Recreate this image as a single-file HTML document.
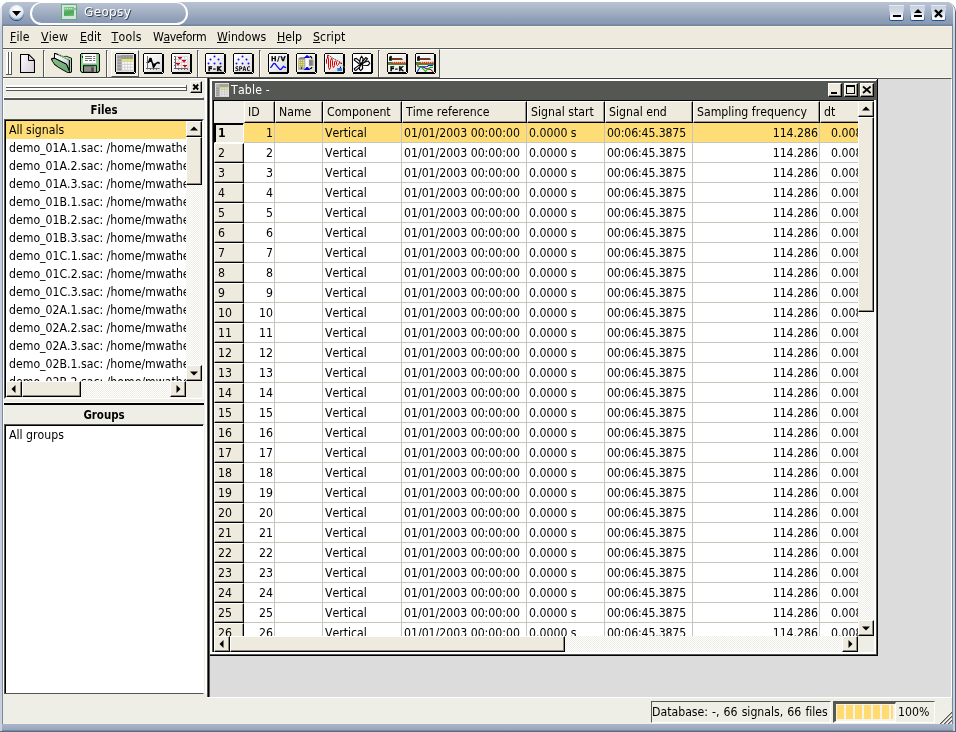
<!DOCTYPE html>
<html lang="en"><head><meta charset="utf-8"><title>Geopsy</title>
<style>
html,body{margin:0;padding:0;background:#fff;}
body{width:956px;height:732px;overflow:hidden;position:relative;font-family:"DejaVu Sans Condensed","DejaVu Sans","Liberation Sans",sans-serif;font-size:12.2px;color:#000;font-kerning:none;font-variant-ligatures:none;}
div,span,svg{position:absolute;box-sizing:border-box;}
.t{white-space:pre;line-height:14px;height:14px;}
.u{position:static;text-decoration:underline;text-underline-offset:1px;}
.rb{background:#EEEADE;border-top:1px solid #fff;border-left:1px solid #fff;border-right:1px solid #000;border-bottom:1px solid #000;box-shadow:inset -1px -1px 0 #8D8A82;}
.hd{background:#EEEADE;border-top:1px solid #fff;border-left:1px solid #fff;border-right:1px solid #000;border-bottom:1px solid #000;box-shadow:inset -1px -1px 0 #9C998F;}
.sk{background:#fff;border-top:1px solid #000;border-left:1px solid #000;border-right:1px solid #fff;border-bottom:1px solid #fff;}
.c{white-space:pre;height:19px;line-height:20px;overflow:hidden;}
.li{white-space:pre;height:18px;line-height:18px;left:0;width:400px;padding-left:3px;}
.tri{width:0;height:0;}
.trk{background:#fff conic-gradient(#fff 25%,#EFEEE6 0 50%,#fff 0 75%,#EFEEE6 0) 0 0/2px 2px;}
</style></head>
<body>
<div id="app" style="left:0;top:0;width:956px;height:732px;will-change:transform;">
<!-- window frame -->
<div style="left:0px;top:2px;width:956px;height:730px;border-radius:9px 10px 0 0;background:linear-gradient(to right,#D7DDE7 0,#D7DDE7 478px,#566074 478px);"></div><div style="left:0px;top:2px;width:955px;height:729px;border-radius:9px 9px 0 0;background:linear-gradient(to bottom,#F2F4F8 0,#DDE2EA 14px,#C8D0DD 30px,#C8D0DD 100%);"></div><div style="left:2px;top:2px;width:951px;height:729px;border-radius:7px 8px 0 0;background:#7A889C;"></div><div style="left:3px;top:2px;width:949px;height:722px;border-radius:6px 7px 0 0;background:#EFEEE6;"></div><div style="left:2px;top:724px;width:951px;height:8px;background:linear-gradient(to bottom,#A9B6C9 0,#97A6BD 6px,#5D6B83 7px,#5D6B83 8px);"></div><div style="left:0px;top:731px;width:956px;height:1px;background:#5D6B83;"></div><div style="left:2px;top:2px;width:951px;height:24px;border-radius:7px 8px 0 0;background:linear-gradient(to bottom,#B9C3D2 0,#ACB8C9 6px,#9EABC0 12px,#91A0B8 17px,#8798B1 22px,#71829B 23px,#71829B 24px);"></div><div style="left:9px;top:5px;width:15px;height:15px;border-radius:50%;background:radial-gradient(circle at 50% 30%,#ffffff 0,#e9edf3 45%,#cdd6e2 75%,#aab8cc 100%);box-shadow:0 1px 0 #1D4C87, inset 0 -1px 1px #3b64998c;"></div><svg style="left:12px;top:11px" width="9" height="5" viewBox="0 0 9 5"><path d="M0 0H9L4.5 5Z" fill="#000"/></svg><div style="left:30px;top:2px;width:158px;height:23px;border:2px solid #fff;border-top-width:1px;border-radius:12px;"></div><div style="left:61px;top:4px;width:16px;height:16px;background:#DADEE8;border:1px solid #58B464;"></div><div style="left:64px;top:7px;width:10px;height:9px;background:linear-gradient(165deg,#8CCB92 0,#62B86C 35%,#4BA857 60%,#6DBB75 100%);"></div><div style="left:64px;top:8px;width:12px;height:2px;background:#86C88C;"></div><div style="left:65px;top:8px;width:8px;height:1px;background:repeating-linear-gradient(to right,#CDE8D0 0,#CDE8D0 1px,#86C88C 1px,#86C88C 2px);"></div><span class="t" style="left:84px;top:4px;font-family:DejaVu Sans,Liberation Sans,sans-serif;font-size:12px;color:#fff;text-shadow:1px 1px 0 #3a4252;line-height:16px;height:16px;letter-spacing:0.35px">Geopsy</span><div style="left:889px;top:5px;width:15px;height:15px;border-radius:0 0 3px 3px;background:linear-gradient(to bottom,rgba(29,76,135,0) 30%,rgba(29,76,135,.9) 100%) left/1px 100% no-repeat,linear-gradient(to bottom,rgba(29,76,135,0) 30%,rgba(29,76,135,.9) 100%) right/1px 100% no-repeat,linear-gradient(to bottom,#E6EAF1 0,#E6EAF1 1px,#C6D0DE 1px,#D2DAE5 40%,#F1F4F8 72%,#ffffff 100%);box-shadow:0 1px 0 #1D4C87;"></div><div style="left:910px;top:5px;width:15px;height:15px;border-radius:0 0 3px 3px;background:linear-gradient(to bottom,rgba(29,76,135,0) 30%,rgba(29,76,135,.9) 100%) left/1px 100% no-repeat,linear-gradient(to bottom,rgba(29,76,135,0) 30%,rgba(29,76,135,.9) 100%) right/1px 100% no-repeat,linear-gradient(to bottom,#E6EAF1 0,#E6EAF1 1px,#C6D0DE 1px,#D2DAE5 40%,#F1F4F8 72%,#ffffff 100%);box-shadow:0 1px 0 #1D4C87;"></div><div style="left:931px;top:5px;width:15px;height:15px;border-radius:0 0 3px 3px;background:linear-gradient(to bottom,rgba(29,76,135,0) 30%,rgba(29,76,135,.9) 100%) left/1px 100% no-repeat,linear-gradient(to bottom,rgba(29,76,135,0) 30%,rgba(29,76,135,.9) 100%) right/1px 100% no-repeat,linear-gradient(to bottom,#E6EAF1 0,#E6EAF1 1px,#C6D0DE 1px,#D2DAE5 40%,#F1F4F8 72%,#ffffff 100%);box-shadow:0 1px 0 #1D4C87;"></div><div style="left:893px;top:15px;width:8px;height:2px;background:#000;"></div><svg style="left:914px;top:9px" width="8" height="9" viewBox="0 0 8 9"><path d="M4 0L8 4H0Z" fill="#000"/><rect x="0" y="6" width="8" height="2" fill="#000"/></svg><svg style="left:934px;top:9px" width="9" height="9" viewBox="0 0 9 9"><path d="M1 1L8 8M8 1L1 8" stroke="#000" stroke-width="2.4"/></svg>
<!-- menu bar -->
<div style="left:3px;top:26px;width:949px;height:22px;background:#EEEADE;border-top:1px solid #F6F3E6;border-bottom:1px solid #F6F3E6;"></div><div style="left:3px;top:48px;width:949px;height:1px;background:#555753;"></div><span class="t" style="left:10px;top:30px;letter-spacing:0.1px"><span class="u">F</span>ile</span><span class="t" style="left:41px;top:30px;letter-spacing:0.25px"><span class="u">V</span>iew</span><span class="t" style="left:80px;top:30px;letter-spacing:0px"><span class="u">E</span>dit</span><span class="t" style="left:111.5px;top:30px;letter-spacing:0.3px"><span class="u">T</span>ools</span><span class="t" style="left:153px;top:30px;letter-spacing:-0.4px">W<span class="u">a</span>veform</span><span class="t" style="left:217px;top:30px;letter-spacing:0px"><span class="u">W</span>indows</span><span class="t" style="left:277px;top:30px;letter-spacing:0px"><span class="u">H</span>elp</span><span class="t" style="left:313px;top:30px;letter-spacing:0.1px"><span class="u">S</span>cript</span>
<!-- toolbar -->
<div style="left:3px;top:49px;width:949px;height:28px;background:#EFEEE6;border-top:1px solid #fff;"></div><div style="left:3px;top:49px;width:437px;height:29px;background:#EEEADE;border-top:1px solid #fff;border-right:1px solid #555753;border-bottom:1px solid #555753;"></div><div style="left:440px;top:77px;width:512px;height:1px;background:#F7F6F0;"></div><div style="left:6px;top:52px;width:3px;height:23px;background:#fff;border-right:1px solid #555753;"></div><div style="left:9px;top:52px;width:3px;height:23px;background:#fff;border-right:1px solid #555753;"></div><div style="left:6px;top:74px;width:6px;height:1px;background:#555753;"></div><div style="left:43px;top:50px;width:2px;height:27px;border-left:1px solid #555753;border-right:1px solid #fff;border-top:1px solid #555753;"></div><div style="left:106px;top:50px;width:2px;height:27px;border-left:1px solid #555753;border-right:1px solid #fff;border-top:1px solid #555753;"></div><div style="left:197px;top:50px;width:2px;height:27px;border-left:1px solid #555753;border-right:1px solid #fff;border-top:1px solid #555753;"></div><div style="left:259px;top:50px;width:2px;height:27px;border-left:1px solid #555753;border-right:1px solid #fff;border-top:1px solid #555753;"></div><div style="left:378px;top:50px;width:2px;height:27px;border-left:1px solid #555753;border-right:1px solid #fff;border-top:1px solid #555753;"></div><div style="left:111px;top:50px;width:28px;height:27px;background:#F3F0E6;border-top:1px solid #fff;border-left:1px solid #fff;border-right:1px solid #555753;border-bottom:1px solid #555753;"></div><svg style="left:20px;top:54px" width="15" height="19" viewBox="0 0 15 19" ><defs><linearGradient id="nd" x1="0" y1="0" x2="1" y2="0.6"><stop offset="0" stop-color="#fff"/><stop offset="0.45" stop-color="#eceaee"/><stop offset="1" stop-color="#d9d6dc"/></linearGradient></defs><path d="M0.5 0.5H8.8L14.5 6.2V18.5H0.5Z" fill="url(#nd)" stroke="#000" stroke-width="1.1"/><path d="M8.5 0.8V6.5H14.2" fill="none" stroke="#000" stroke-width="1"/><path d="M9 2L13 6H9Z" fill="#d8d5db"/></svg>
<svg style="left:51px;top:53px" width="21" height="20" viewBox="0 0 21 20" ><defs><linearGradient id="fp" x1="0" y1="0" x2="1" y2="1"><stop offset="0" stop-color="#ffffff"/><stop offset="0.5" stop-color="#e6e6ea"/><stop offset="1" stop-color="#b4b4ba"/></linearGradient><linearGradient id="ff" x1="0" y1="0" x2="1" y2="1"><stop offset="0" stop-color="#86bf8c"/><stop offset="1" stop-color="#68a571"/></linearGradient></defs><path d="M3 0H4.6L8 1.2L10 2L12.5 3.2L15 2.7L20 4.6L21 5.6V19L19.6 20H16.6L12 17.5L7 14.5L3.5 12L1.5 9L0 6.6V5.4L3 4.5Z" fill="#000"/><path d="M4.2 1.2L20 6V18.6L19.3 19L18.4 17.5V7L4.2 1.6Z" fill="#a3e0a9"/><path d="M12.8 3.8L15 3.4L19.8 5.3V6.5L12.8 4.2Z" fill="#a3e0a9"/><path d="M7.5 1.3L9 1.9M9.6 2.3L11.1 2.9M11.7 3.2L12.6 3.6" stroke="#8fd496" stroke-width="1.2"/><path d="M4 1L18 7.2V16.6L15.7 11L4 5Z" fill="url(#fp)"/><path d="M3.5 0.6V5M18.3 7V17" stroke="#000" stroke-width="1"/><path d="M1 6L3.6 5.4L15.4 11.4L18.2 17.9L18.4 19L16.8 19.2L12 16.5L7 13.5L3.8 11L2 8.5Z" fill="url(#ff)"/><path d="M0.8 5.9L3.6 5.2L15.5 11.2L18.4 18" stroke="#000" stroke-width="1" fill="none"/></svg>
<svg style="left:80px;top:53px" width="20" height="20" viewBox="0 0 20 20" ><path d="M1 0H19V1H20V18L18 20H2L0 18V1H1Z" fill="#000"/><path d="M1 1H19V17.6L17.6 19H2.4L1 17.6Z" fill="#6fc077"/><path d="M1 1H3V19H2.4L1 17.6Z" fill="#8ad890"/><rect x="17" y="1.5" width="1.2" height="16" fill="#80cf87"/><rect x="3" y="1" width="13.6" height="9.8" fill="#c9c1cd"/><rect x="3" y="1" width="13" height="9.2" fill="#fff"/><path d="M5 3.5H12M13.2 3.5H15.2M5 5.5H12M13.2 5.5H15.2M5 7.5H7.9M9.1 7.5H12M13.2 7.5H15.2" stroke="#6c6c6c" stroke-width="1"/><rect x="2" y="3" width="1" height="2" fill="#1c3a20"/><rect x="3" y="12.3" width="13.8" height="7.7" fill="#000"/><rect x="4" y="13.2" width="12" height="5.6" fill="#8b8b8b"/><rect x="14" y="13.2" width="2" height="5.6" fill="#a2a2a2"/><rect x="11.2" y="14.3" width="2.6" height="4.5" fill="#4e4e4e"/></svg>
<svg style="left:115px;top:53px" width="21" height="21" viewBox="0 0 21 21" ><defs><linearGradient id="fg1" x1="0" y1="0" x2="1" y2="1"><stop offset="0" stop-color="#ffffff"/><stop offset="0.5" stop-color="#efefef"/><stop offset="1" stop-color="#d9d9d9"/></linearGradient></defs><path d="M1 0H19V1H21V20H20V21H1V19H0V1H1Z" fill="#000"/><rect x="1" y="1" width="18" height="18" fill="url(#fg1)"/><path d="M1.5 18.5V1.5H18.5" fill="none" stroke="#fff" stroke-opacity="0.8"/><rect x="1" y="1" width="18" height="18" fill="#e2e2e2"/><rect x="2" y="2" width="16" height="16" fill="#d0d0d0"/><rect x="2" y="2" width="16" height="4" fill="#a2a2a2"/><rect x="2" y="2" width="4.6" height="16" fill="#b9b9b9"/><rect x="6.6" y="2.5" width="1" height="3.5" fill="#8a8a8a"/><rect x="9.5" y="2.5" width="1" height="3.5" fill="#8a8a8a"/><rect x="12.4" y="2.5" width="1" height="3.5" fill="#8a8a8a"/><rect x="15.3" y="2.5" width="1" height="3.5" fill="#8a8a8a"/><rect x="2.4" y="3.2" width="4" height="1.9" fill="#9a9a9a"/><rect x="2.4" y="6.2" width="4" height="1.9" fill="#9a9a9a"/><rect x="2.4" y="9.2" width="4" height="1.9" fill="#9a9a9a"/><rect x="2.4" y="12.2" width="4" height="1.9" fill="#9a9a9a"/><rect x="2.4" y="15.2" width="4" height="1.9" fill="#9a9a9a"/><rect x="7.4" y="6" width="2" height="1.8" fill="#f6f200"/><rect x="7.4" y="9.0" width="2" height="1.9" fill="#fbfbfb"/><rect x="7.4" y="11.9" width="2" height="1.9" fill="#fbfbfb"/><rect x="7.4" y="14.8" width="2" height="1.9" fill="#fbfbfb"/><rect x="10.3" y="6" width="2" height="1.8" fill="#f6f200"/><rect x="10.3" y="9.0" width="2" height="1.9" fill="#fbfbfb"/><rect x="10.3" y="11.9" width="2" height="1.9" fill="#fbfbfb"/><rect x="10.3" y="14.8" width="2" height="1.9" fill="#fbfbfb"/><rect x="13.2" y="6" width="2" height="1.8" fill="#f6f200"/><rect x="13.2" y="9.0" width="2" height="1.9" fill="#fbfbfb"/><rect x="13.2" y="11.9" width="2" height="1.9" fill="#fbfbfb"/><rect x="13.2" y="14.8" width="2" height="1.9" fill="#fbfbfb"/><rect x="16.1" y="6" width="2" height="1.8" fill="#f6f200"/><rect x="16.1" y="9.0" width="2" height="1.9" fill="#fbfbfb"/><rect x="16.1" y="11.9" width="2" height="1.9" fill="#fbfbfb"/><rect x="16.1" y="14.8" width="2" height="1.9" fill="#fbfbfb"/><rect x="19" y="19" width="1" height="1" fill="#fff"/></svg>
<svg style="left:143px;top:53px" width="21" height="21" viewBox="0 0 21 21" ><defs><linearGradient id="fg2" x1="0" y1="0" x2="1" y2="1"><stop offset="0" stop-color="#ffffff"/><stop offset="0.5" stop-color="#efefef"/><stop offset="1" stop-color="#d9d9d9"/></linearGradient></defs><path d="M1 0H19V1H21V20H20V21H1V19H0V1H1Z" fill="#000"/><rect x="1" y="1" width="18" height="18" fill="url(#fg2)"/><path d="M1.5 18.5V1.5H18.5" fill="none" stroke="#fff" stroke-opacity="0.8"/><path d="M4.5 3V16.4M3 15.5H16.7" stroke="#6e6e6e" stroke-width="1" fill="none"/><path d="M7.5 16V17M10.5 16V17M13.5 16V17M3 9.5H4" stroke="#6e6e6e" stroke-width="1"/><path d="M5 9.6L6 8.6L7 5.6L8 5.6L9 9L9.7 11L10.5 14.4L11.6 12.5L12.6 11L13.6 10.2L15 9.3L16.7 10.3" stroke="#000" stroke-width="1.5" fill="none" stroke-linejoin="round"/><path d="M6 8.8L7 5H8.2L9.2 9.2Z M9.2 10.4L12.9 10.6L12 13L10.5 15.2L9.7 13Z M13.8 10.2L15 8.7L16 9.3L16.8 10.5Z" fill="#000"/><rect x="19" y="19" width="1" height="1" fill="#fff"/></svg>
<svg style="left:171px;top:53px" width="21" height="21" viewBox="0 0 21 21" ><defs><linearGradient id="fg3" x1="0" y1="0" x2="1" y2="1"><stop offset="0" stop-color="#ffffff"/><stop offset="0.5" stop-color="#efefef"/><stop offset="1" stop-color="#d9d9d9"/></linearGradient></defs><path d="M1 0H19V1H21V20H20V21H1V19H0V1H1Z" fill="#000"/><rect x="1" y="1" width="18" height="18" fill="url(#fg3)"/><path d="M1.5 18.5V1.5H18.5" fill="none" stroke="#fff" stroke-opacity="0.8"/><rect x="5" y="3" width="11.6" height="12" fill="#d6d6d6"/><rect x="5.2" y="4" width="1.9" height="1.9" fill="#fdfdfd"/><rect x="8.2" y="4" width="1.9" height="1.9" fill="#fdfdfd"/><rect x="11.2" y="4" width="1.9" height="1.9" fill="#fdfdfd"/><rect x="14.2" y="4" width="1.9" height="1.9" fill="#fdfdfd"/><rect x="5.2" y="7" width="1.9" height="1.9" fill="#fdfdfd"/><rect x="8.2" y="7" width="1.9" height="1.9" fill="#fdfdfd"/><rect x="11.2" y="7" width="1.9" height="1.9" fill="#fdfdfd"/><rect x="14.2" y="7" width="1.9" height="1.9" fill="#fdfdfd"/><rect x="5.2" y="10" width="1.9" height="1.9" fill="#fdfdfd"/><rect x="8.2" y="10" width="1.9" height="1.9" fill="#fdfdfd"/><rect x="11.2" y="10" width="1.9" height="1.9" fill="#fdfdfd"/><rect x="14.2" y="10" width="1.9" height="1.9" fill="#fdfdfd"/><rect x="5.2" y="13" width="1.9" height="1.9" fill="#fdfdfd"/><rect x="8.2" y="13" width="1.9" height="1.9" fill="#fdfdfd"/><rect x="11.2" y="13" width="1.9" height="1.9" fill="#fdfdfd"/><rect x="14.2" y="13" width="1.9" height="1.9" fill="#fdfdfd"/><path d="M4.5 3.2V16M3 15.5H16.7" stroke="#666" stroke-width="1" fill="none"/><path d="M3 3.5H4M3 6.5H4M3 9.5H4M3 12.5H4M7.5 16V17M10.5 16V17M13.5 16V17M16.5 16V17" stroke="#666" stroke-width="1"/><path d="M7 4H11V4.9L10 5.2L9.4 6.5H8.6L8 5.2L7 4.9Z" fill="#d00010"/><path d="M11 7H15V7.9L14 8.2L13.4 9.5H12.6L12 8.2L11 7.9Z" fill="#d00010"/><path d="M5 10H9V10.9L8 11.2L7.4 12.5H6.6L6 11.2L5 10.9Z" fill="#d00010"/><path d="M12 12H16V12.9L15 13.2L14.4 14.5H13.6L13 13.2L12 12.9Z" fill="#d00010"/><rect x="19" y="19" width="1" height="1" fill="#fff"/></svg>
<svg style="left:205px;top:53px" width="21" height="21" viewBox="0 0 21 21" ><defs><linearGradient id="fg4" x1="0" y1="0" x2="1" y2="1"><stop offset="0" stop-color="#ffffff"/><stop offset="0.5" stop-color="#efefef"/><stop offset="1" stop-color="#d9d9d9"/></linearGradient></defs><path d="M1 0H19V1H21V20H20V21H1V19H0V1H1Z" fill="#000"/><rect x="1" y="1" width="18" height="18" fill="url(#fg4)"/><path d="M1.5 18.5V1.5H18.5" fill="none" stroke="#fff" stroke-opacity="0.8"/><path d="M9.5 2.0L11.0 3.5L9.5 5.0L8.0 3.5Z" fill="#0a0aff" fill-opacity="0.45"/><rect x="8.9" y="2.9" width="1.2" height="1.2" fill="#0a0aff"/><path d="M5.5 5.0L7.0 6.5L5.5 8.0L4.0 6.5Z" fill="#0a0aff" fill-opacity="0.45"/><rect x="4.9" y="5.9" width="1.2" height="1.2" fill="#0a0aff"/><path d="M13.5 5.0L15.0 6.5L13.5 8.0L12.0 6.5Z" fill="#0a0aff" fill-opacity="0.45"/><rect x="12.9" y="5.9" width="1.2" height="1.2" fill="#0a0aff"/><path d="M3.5 9.0L5.0 10.5L3.5 12.0L2.0 10.5Z" fill="#0a0aff" fill-opacity="0.45"/><rect x="2.9" y="9.9" width="1.2" height="1.2" fill="#0a0aff"/><path d="M9.5 9.0L11.0 10.5L9.5 12.0L8.0 10.5Z" fill="#0a0aff" fill-opacity="0.45"/><rect x="8.9" y="9.9" width="1.2" height="1.2" fill="#0a0aff"/><path d="M15.5 9.0L17.0 10.5L15.5 12.0L14.0 10.5Z" fill="#0a0aff" fill-opacity="0.45"/><rect x="14.9" y="9.9" width="1.2" height="1.2" fill="#0a0aff"/><text x="2.9" y="17.9" font-family="DejaVu Sans,Liberation Sans,sans-serif" font-weight="bold" font-size="6.6" textLength="13.6" lengthAdjust="spacing" stroke="#000" stroke-width="0.35">F-K</text><rect x="19" y="19" width="1" height="1" fill="#fff"/></svg>
<svg style="left:233px;top:53px" width="21" height="21" viewBox="0 0 21 21" ><defs><linearGradient id="fg5" x1="0" y1="0" x2="1" y2="1"><stop offset="0" stop-color="#ffffff"/><stop offset="0.5" stop-color="#efefef"/><stop offset="1" stop-color="#d9d9d9"/></linearGradient></defs><path d="M1 0H19V1H21V20H20V21H1V19H0V1H1Z" fill="#000"/><rect x="1" y="1" width="18" height="18" fill="url(#fg5)"/><path d="M1.5 18.5V1.5H18.5" fill="none" stroke="#fff" stroke-opacity="0.8"/><path d="M9.5 2.0L11.0 3.5L9.5 5.0L8.0 3.5Z" fill="#0a0aff" fill-opacity="0.45"/><rect x="8.9" y="2.9" width="1.2" height="1.2" fill="#0a0aff"/><path d="M5.5 5.0L7.0 6.5L5.5 8.0L4.0 6.5Z" fill="#0a0aff" fill-opacity="0.45"/><rect x="4.9" y="5.9" width="1.2" height="1.2" fill="#0a0aff"/><path d="M13.5 5.0L15.0 6.5L13.5 8.0L12.0 6.5Z" fill="#0a0aff" fill-opacity="0.45"/><rect x="12.9" y="5.9" width="1.2" height="1.2" fill="#0a0aff"/><path d="M3.5 9.0L5.0 10.5L3.5 12.0L2.0 10.5Z" fill="#0a0aff" fill-opacity="0.45"/><rect x="2.9" y="9.9" width="1.2" height="1.2" fill="#0a0aff"/><path d="M9.5 9.0L11.0 10.5L9.5 12.0L8.0 10.5Z" fill="#0a0aff" fill-opacity="0.45"/><rect x="8.9" y="9.9" width="1.2" height="1.2" fill="#0a0aff"/><path d="M15.5 9.0L17.0 10.5L15.5 12.0L14.0 10.5Z" fill="#0a0aff" fill-opacity="0.45"/><rect x="14.9" y="9.9" width="1.2" height="1.2" fill="#0a0aff"/><text x="2" y="17.9" font-family="DejaVu Sans Mono,Liberation Mono,monospace" font-weight="bold" font-size="6.4" textLength="15.2" lengthAdjust="spacingAndGlyphs">SPAC</text><rect x="19" y="19" width="1" height="1" fill="#fff"/></svg>
<svg style="left:268px;top:53px" width="21" height="21" viewBox="0 0 21 21" ><defs><linearGradient id="fg6" x1="0" y1="0" x2="1" y2="1"><stop offset="0" stop-color="#ffffff"/><stop offset="0.5" stop-color="#efefef"/><stop offset="1" stop-color="#d9d9d9"/></linearGradient></defs><path d="M1 0H19V1H21V20H20V21H1V19H0V1H1Z" fill="#000"/><rect x="1" y="1" width="18" height="18" fill="url(#fg6)"/><path d="M1.5 18.5V1.5H18.5" fill="none" stroke="#fff" stroke-opacity="0.8"/><text x="2.9" y="7.9" font-family="DejaVu Sans,Liberation Sans,sans-serif" font-weight="bold" font-size="6.6" textLength="14.8" lengthAdjust="spacing" stroke="#000" stroke-width="0.25">H/V</text><path d="M2.3 14.7L3.6 13.6L5 11.2L6 10.4L7 10.6L8.5 12.6L10 14.4L11.4 16L12.4 16.5L13.4 16L14.6 14.4L15.5 13.4L16.6 14.2L18 14.6" stroke="#0a0aff" stroke-width="1.3" fill="none"/></svg>
<svg style="left:296px;top:53px" width="21" height="21" viewBox="0 0 21 21" ><defs><linearGradient id="fg7" x1="0" y1="0" x2="1" y2="1"><stop offset="0" stop-color="#ffffff"/><stop offset="0.5" stop-color="#efefef"/><stop offset="1" stop-color="#d9d9d9"/></linearGradient></defs><path d="M1 0H19V1H21V20H20V21H1V19H0V1H1Z" fill="#000"/><rect x="1" y="1" width="18" height="18" fill="url(#fg7)"/><path d="M1.5 18.5V1.5H18.5" fill="none" stroke="#fff" stroke-opacity="0.8"/><defs><linearGradient id="bsh" x1="0" y1="0" x2="1" y2="0"><stop offset="0" stop-color="#6e6e6e"/><stop offset="0.6" stop-color="#858585"/><stop offset="1" stop-color="#b5b5b5"/></linearGradient><linearGradient id="bcy" x1="0" y1="0" x2="1" y2="0"><stop offset="0" stop-color="#d0d0d0"/><stop offset="0.4" stop-color="#ffffff"/><stop offset="1" stop-color="#e6e6e6"/></linearGradient></defs><path d="M2.2 6L3.8 4.3H9V6Z" fill="#7e7e7e"/><rect x="2.2" y="5.8" width="6.7" height="11" fill="#a4a4ac"/><rect x="3" y="7" width="1.2" height="1.2" fill="#fff600"/><rect x="5" y="7" width="1.2" height="1.2" fill="#fff600"/><rect x="7" y="7" width="1.2" height="1.2" fill="#fff600"/><rect x="3" y="9" width="1.2" height="1.2" fill="#fff600"/><rect x="5" y="9" width="1.2" height="1.2" fill="#fff600"/><rect x="7" y="9" width="1.2" height="1.2" fill="#fff600"/><rect x="3" y="11" width="1.2" height="1.2" fill="#fff600"/><rect x="5" y="11" width="1.2" height="1.2" fill="#fff600"/><rect x="7" y="11" width="1.2" height="1.2" fill="#fff600"/><rect x="3" y="13" width="1.2" height="1.2" fill="#fff600"/><rect x="7" y="13" width="1.2" height="1.2" fill="#fff600"/><rect x="5" y="14.2" width="1" height="2" fill="#3a3a3a"/><rect x="9" y="5" width="4.2" height="9" fill="url(#bcy)"/><rect x="13.2" y="6.6" width="4.6" height="6.2" fill="url(#bsh)"/><path d="M10.5 2.2H11.7L14.2 4.9H7.8Z M10.6 14H11.8L14.2 16.9H7.8Z" fill="#0808d8"/><path d="M13.6 3.4Q15.8 3.4 15.7 5.6M13.6 15.8Q15.6 15.8 16 14.2" stroke="#000" stroke-width="1.3" fill="none"/><rect x="19" y="19" width="1" height="1" fill="#fff"/></svg>
<svg style="left:324px;top:53px" width="21" height="21" viewBox="0 0 21 21" ><defs><linearGradient id="fg8" x1="0" y1="0" x2="1" y2="1"><stop offset="0" stop-color="#ffffff"/><stop offset="0.5" stop-color="#efefef"/><stop offset="1" stop-color="#d9d9d9"/></linearGradient></defs><path d="M1 0H19V1H21V20H20V21H1V19H0V1H1Z" fill="#000"/><rect x="1" y="1" width="18" height="18" fill="url(#fg8)"/><path d="M1.5 18.5V1.5H18.5" fill="none" stroke="#fff" stroke-opacity="0.8"/><path d="M2.5 10.7V6.2L3.5 5.5V2.3L4.5 5.9V14.5L5.5 16.5L6.5 14.4V8L7.5 5.2L8.5 7.7V12.6L9.5 14.6L10.5 12.6V8.7L11.5 8L12.5 9V11.6L13.5 12.6L14.5 11.4L15.5 9.4L16.5 10.3L18 10.5" stroke="#e40000" stroke-width="1" fill="none" stroke-linejoin="miter"/><path d="M3.8 2L6 3.2L8.5 5L11 6.5L14 8L17.6 10" stroke="#000" stroke-width="0.9" stroke-dasharray="1.2 1" fill="none"/><rect x="13.2" y="15.1" width="4.8" height="2.8" rx="0.7" fill="#1f7fe4"/><path d="M16.5 15V13.5" stroke="#000" stroke-width="1"/><path d="M16.5 13.4Q17.6 11.8 19 12.8T20.6 14.6" stroke="#c9c9c9" stroke-width="0.9" stroke-dasharray="1.2 0.8" fill="none"/></svg>
<svg style="left:352px;top:53px" width="21" height="21" viewBox="0 0 21 21" ><defs><linearGradient id="fg9" x1="0" y1="0" x2="1" y2="1"><stop offset="0" stop-color="#ffffff"/><stop offset="0.5" stop-color="#efefef"/><stop offset="1" stop-color="#d9d9d9"/></linearGradient></defs><path d="M1 0H19V1H21V20H20V21H1V19H0V1H1Z" fill="#000"/><rect x="1" y="1" width="18" height="18" fill="url(#fg9)"/><path d="M1.5 18.5V1.5H18.5" fill="none" stroke="#fff" stroke-opacity="0.8"/><rect x="1" y="1" width="18" height="18" fill="#fdfdfd"/><g fill="#fff" stroke="#000" stroke-width="1.15" stroke-linejoin="round"><path d="M9 11L7.1 10.7L2.3 7.1L2.6 5.9L4.3 5.4L8.4 8.7Z"/><path d="M9 11L7.7 9.1L8.4 5.2L9.6 3.2L11.2 5.9L10.3 9.1Z"/><path d="M9.2 11L10.7 8.7L13.7 4.6L15.5 5.7L11.9 10.1Z"/><path d="M9.4 11.2L12.6 9.3L16.2 8L17.8 10.3L15.8 12.5L11.2 12.3Z"/><path d="M9 11.2L7.8 12.3L7.3 16.2L8.7 17.6L10.7 15.5L10.3 12.3Z"/><path d="M9 11.2L6.6 12.6L2.3 15.7L2.6 16.9L3.8 17.6L7.7 14.1Z"/></g></svg>
<svg style="left:387px;top:53px" width="21" height="21" viewBox="0 0 21 21" ><defs><linearGradient id="fg10" x1="0" y1="0" x2="1" y2="1"><stop offset="0" stop-color="#ffffff"/><stop offset="0.5" stop-color="#efefef"/><stop offset="1" stop-color="#d9d9d9"/></linearGradient></defs><path d="M1 0H19V1H21V20H20V21H1V19H0V1H1Z" fill="#000"/><rect x="1" y="1" width="18" height="18" fill="url(#fg10)"/><path d="M1.5 18.5V1.5H18.5" fill="none" stroke="#fff" stroke-opacity="0.8"/><rect x="2.1" y="3.6" width="2.8" height="4.2" fill="#111"/><rect x="3" y="2.9" width="1.8" height="1" fill="#111"/><path d="M4.8 5H14.8L16 6.9H4.8Z" fill="#6c3a20"/><rect x="1" y="9.1" width="4" height="0.8" fill="#2f4d22"/><rect x="1" y="9.9" width="18" height="2.1" fill="#4f8a30"/><rect x="4.90" y="8.8" width="1.1" height="1.9" rx="0.4" fill="#ff2400"/><rect x="6.92" y="8.8" width="1.1" height="1.9" rx="0.4" fill="#ff2400"/><rect x="8.94" y="8.8" width="1.1" height="1.9" rx="0.4" fill="#ff2400"/><rect x="10.96" y="8.8" width="1.1" height="1.9" rx="0.4" fill="#ff2400"/><rect x="12.98" y="8.8" width="1.1" height="1.9" rx="0.4" fill="#ff2400"/><rect x="15.00" y="8.8" width="1.1" height="1.9" rx="0.4" fill="#ff2400"/><rect x="17.02" y="8.8" width="1.1" height="1.9" rx="0.4" fill="#ff2400"/><rect x="1" y="12" width="18" height="7" fill="#f0f0f0"/><text x="2.9" y="17.9" font-family="DejaVu Sans,Liberation Sans,sans-serif" font-weight="bold" font-size="6.6" textLength="13.6" lengthAdjust="spacing" stroke="#000" stroke-width="0.35">F-K</text><rect x="19" y="19" width="1" height="1" fill="#fff"/></svg>
<svg style="left:415px;top:53px" width="21" height="21" viewBox="0 0 21 21" ><defs><linearGradient id="fg11" x1="0" y1="0" x2="1" y2="1"><stop offset="0" stop-color="#ffffff"/><stop offset="0.5" stop-color="#efefef"/><stop offset="1" stop-color="#d9d9d9"/></linearGradient></defs><path d="M1 0H19V1H21V20H20V21H1V19H0V1H1Z" fill="#000"/><rect x="1" y="1" width="18" height="18" fill="url(#fg11)"/><path d="M1.5 18.5V1.5H18.5" fill="none" stroke="#fff" stroke-opacity="0.8"/><rect x="2.1" y="3.6" width="2.8" height="4.2" fill="#111"/><rect x="3" y="2.9" width="1.8" height="1" fill="#111"/><path d="M4.8 5H14.8L16 6.9H4.8Z" fill="#6c3a20"/><rect x="1" y="9.1" width="4" height="0.8" fill="#2f4d22"/><rect x="1" y="9.9" width="18" height="2.1" fill="#4f8a30"/><rect x="4.90" y="8.8" width="1.1" height="1.9" rx="0.4" fill="#ff2400"/><rect x="6.92" y="8.8" width="1.1" height="1.9" rx="0.4" fill="#ff2400"/><rect x="8.94" y="8.8" width="1.1" height="1.9" rx="0.4" fill="#ff2400"/><rect x="10.96" y="8.8" width="1.1" height="1.9" rx="0.4" fill="#ff2400"/><rect x="12.98" y="8.8" width="1.1" height="1.9" rx="0.4" fill="#ff2400"/><rect x="15.00" y="8.8" width="1.1" height="1.9" rx="0.4" fill="#ff2400"/><rect x="17.02" y="8.8" width="1.1" height="1.9" rx="0.4" fill="#ff2400"/><rect x="1" y="12" width="18" height="7" fill="#f0f0f0"/><path d="M2.3 12.3L3.7 13.5L9.4 14.4L10.5 15.5L15.5 16.4L18 18.7" stroke="#9a0c14" stroke-width="1.1" fill="none"/><path d="M2.3 18.7L3.6 16.5L5.2 14L12.6 13.5L13.3 12.5H18" stroke="#0f28e0" stroke-width="1.1" fill="none"/><path d="M2.3 13.5L6.6 14.4L10.5 18.5L13 15.8L15.5 14.4H18" stroke="#10b81c" stroke-width="1.1" fill="none"/><rect x="19" y="19" width="1" height="1" fill="#fff"/></svg>

<!-- left dock: files / groups -->
<div style="left:3px;top:78px;width:203px;height:616px;background:#EFEEE6;border-top:1px solid #fff;border-left:1px solid #fff;"></div><div style="left:205px;top:78px;width:2px;height:646px;background:#fff;"></div><div style="left:207px;top:78px;width:3px;height:619px;background:linear-gradient(to right,#555753 0,#555753 1px,#000 1px,#000 2px,#5d5e5b 2px);"></div><div style="left:6px;top:85px;width:181px;height:3px;background:#fff;border-bottom:1px solid #555753;border-right:1px solid #555753;"></div><div style="left:6px;top:88px;width:181px;height:3px;background:#fff;border-bottom:1px solid #555753;border-right:1px solid #555753;"></div><div style="left:190px;top:81px;width:12px;height:12px;background:#EEEADE;border-top:1px solid #fff;border-left:1px solid #fff;border-right:1px solid #000;border-bottom:1px solid #000;box-shadow:inset -1px -1px 0 #8D8A82;"></div><svg style="left:192px;top:83px" width="8" height="8" viewBox="0 0 8 8"><path d="M1.2 1.5L6.2 6.5M6.2 1.5L1.2 6.5" stroke="#000" stroke-width="1.9"/></svg><div style="left:4px;top:97px;width:200px;height:3px;border-top:1px solid #fff;background:#555753;border-right:1px solid #555753;"></div><span class="t" style="left:3px;top:103px;width:202px;text-align:center;font-weight:bold;font-size:11.4px;">Files</span><div style="left:4px;top:119px;width:200px;height:280px;border-top:1px solid #555753;border-left:1px solid #555753;border-right:1px solid #fff;border-bottom:1px solid #fff;background:#EFEEE6;"></div><div style="left:5px;top:120px;width:198px;height:278px;border-top:1px solid #000;border-left:1px solid #000;border-right:1px solid #F6F3E6;border-bottom:1px solid #F6F3E6;background:#fff;"></div><div style="left:6px;top:121px;width:180px;height:260px;overflow:hidden;background:#fff;"><div class="li" style="top:0px;background:#FFDD76;width:180px;">All signals</div><div class="li" style="top:18px;">demo_01A.1.sac: /home/mwathelet</div><div class="li" style="top:36px;">demo_01A.2.sac: /home/mwathelet</div><div class="li" style="top:54px;">demo_01A.3.sac: /home/mwathelet</div><div class="li" style="top:72px;">demo_01B.1.sac: /home/mwathelet</div><div class="li" style="top:90px;">demo_01B.2.sac: /home/mwathelet</div><div class="li" style="top:108px;">demo_01B.3.sac: /home/mwathelet</div><div class="li" style="top:126px;">demo_01C.1.sac: /home/mwathelet</div><div class="li" style="top:144px;">demo_01C.2.sac: /home/mwathelet</div><div class="li" style="top:162px;">demo_01C.3.sac: /home/mwathelet</div><div class="li" style="top:180px;">demo_02A.1.sac: /home/mwathelet</div><div class="li" style="top:198px;">demo_02A.2.sac: /home/mwathelet</div><div class="li" style="top:216px;">demo_02A.3.sac: /home/mwathelet</div><div class="li" style="top:234px;">demo_02B.1.sac: /home/mwathelet</div><div class="li" style="top:252px;">demo_02B.2.sac: /home/mwathelet</div></div><div class="trk" style="left:186px;top:121px;width:16px;height:260px;"></div><div class="rb" style="left:186px;top:121px;width:16px;height:16px;"><svg style="left:3px;top:4px" width="8" height="5" viewBox="0 0 8 5"><path d="M4 0.5L8 4.5H0Z" fill="#000"/></svg></div><div class="rb" style="left:186px;top:137px;width:16px;height:48px;"></div><div class="rb" style="left:186px;top:365px;width:16px;height:16px;"><svg style="left:3px;top:5px" width="8" height="5" viewBox="0 0 8 5"><path d="M0 0.5H8L4 4.5Z" fill="#000"/></svg></div><div class="trk" style="left:6px;top:381px;width:180px;height:16px;"></div><div class="rb" style="left:6px;top:381px;width:16px;height:16px;"><svg style="left:4px;top:3px" width="5" height="8" viewBox="0 0 5 8"><path d="M4.5 0V8L0.5 4Z" fill="#000"/></svg></div><div class="rb" style="left:22px;top:381px;width:59px;height:16px;"></div><div class="rb" style="left:170px;top:381px;width:16px;height:16px;"><svg style="left:5px;top:3px" width="5" height="8" viewBox="0 0 5 8"><path d="M0.5 0V8L4.5 4Z" fill="#000"/></svg></div><div style="left:186px;top:381px;width:16px;height:16px;background:#EFEEE6;"></div><div style="left:4px;top:402px;width:200px;height:3px;border-top:1px solid #fff;background:#000;"></div><span class="t" style="left:3px;top:408px;width:202px;text-align:center;font-weight:bold;font-size:11.4px;">Groups</span><div style="left:4px;top:424px;width:200px;height:270px;border-top:1px solid #555753;border-left:1px solid #555753;border-right:1px solid #fff;border-bottom:1px solid #555753;background:#fff;"></div><div style="left:5px;top:425px;width:198px;height:268px;border-top:1px solid #000;border-left:1px solid #000;background:#fff;"></div><div class="li" style="left:6px;top:426px;width:180px">All groups</div>
<!-- MDI workspace -->
<div style="left:210px;top:78px;width:742px;height:619px;background:#DCDCDC;border-top:1px solid #555753;border-right:1px solid #fff;"></div><div style="left:207px;top:697px;width:745px;height:1px;background:#fff;"></div><div style="left:210px;top:78px;width:667px;height:1px;background:#3c3d3a;"></div><div style="left:210px;top:79px;width:668px;height:577px;background:#fff;border-right:1px solid #000;border-bottom:1px solid #000;box-shadow:inset -1px -1px 0 #555753;"></div><div style="left:876px;top:79px;width:1px;height:1px;background:#fff;"></div><div style="left:212px;top:81px;width:663px;height:573px;background:#000;border-left:1px solid #555753;"></div><div style="left:212px;top:81px;width:664px;height:19px;background:#555753;"></div><svg style="left:215px;top:83px" width="14" height="14" viewBox="0 0 14 14" ><rect x="0" y="0" width="14" height="14" fill="#dedede"/><rect x="1" y="1" width="12.4" height="12.4" fill="#c6c6c6"/><rect x="1" y="1" width="12.4" height="3" fill="#a3a3a3"/><rect x="1" y="1" width="3.6" height="12.4" fill="#b4b4b4"/><rect x="1.2" y="4.6" width="3.2" height="1.3" fill="#979797"/><rect x="1.2" y="7.0" width="3.2" height="1.3" fill="#979797"/><rect x="1.2" y="9.4" width="3.2" height="1.3" fill="#979797"/><rect x="1.2" y="11.8" width="3.2" height="1.3" fill="#979797"/><rect x="4.90" y="4.4" width="1.7" height="1.7" rx="0.5" fill="#f6f230"/><rect x="4.90" y="6.9" width="1.7" height="1.6" fill="#ececec"/><rect x="4.90" y="9.2" width="1.7" height="1.6" fill="#ececec"/><rect x="4.90" y="11.5" width="1.7" height="1.6" fill="#ececec"/><rect x="7.35" y="4.4" width="1.7" height="1.7" rx="0.5" fill="#f6f230"/><rect x="7.35" y="6.9" width="1.7" height="1.6" fill="#ececec"/><rect x="7.35" y="9.2" width="1.7" height="1.6" fill="#ececec"/><rect x="7.35" y="11.5" width="1.7" height="1.6" fill="#ececec"/><rect x="9.80" y="4.4" width="1.7" height="1.7" rx="0.5" fill="#f6f230"/><rect x="9.80" y="6.9" width="1.7" height="1.6" fill="#ececec"/><rect x="9.80" y="9.2" width="1.7" height="1.6" fill="#ececec"/><rect x="9.80" y="11.5" width="1.7" height="1.6" fill="#ececec"/><rect x="12.25" y="4.4" width="1.7" height="1.7" rx="0.5" fill="#f6f230"/><rect x="12.25" y="6.9" width="1.7" height="1.6" fill="#ececec"/><rect x="12.25" y="9.2" width="1.7" height="1.6" fill="#ececec"/><rect x="12.25" y="11.5" width="1.7" height="1.6" fill="#ececec"/></svg><span class="t" style="left:231px;top:83px;color:#fff;letter-spacing:0.2px">Table -</span><div class="rb" style="left:828px;top:83px;width:14px;height:14px;"></div><div class="rb" style="left:844px;top:83px;width:14px;height:14px;"></div><div class="rb" style="left:860px;top:83px;width:14px;height:14px;"></div><div style="left:831px;top:92px;width:6px;height:2px;background:#000;"></div><div style="left:846px;top:85px;width:9px;height:9px;border:1px solid #000;border-top-width:2px;"></div><svg style="left:862px;top:85px" width="10" height="9" viewBox="0 0 10 9"><path d="M1 1.5L8.6 8M8.6 1.5L1 8" stroke="#000" stroke-width="1.7"/></svg><div style="left:874px;top:100px;width:2px;height:554px;background:#fff;"></div><div style="left:214px;top:101px;width:660px;height:551px;background:#EFEEE6;"></div><div style="left:244px;top:101px;width:614px;height:22px;overflow:hidden;"><div class="hd" style="left:0px;top:0px;width:31px;height:22px;"><span class="t" style="left:3px;top:3px;">ID</span></div><div class="hd" style="left:31px;top:0px;width:48px;height:22px;"><span class="t" style="left:3px;top:3px;">Name</span></div><div class="hd" style="left:79px;top:0px;width:79px;height:22px;"><span class="t" style="left:3px;top:3px;">Component</span></div><div class="hd" style="left:158px;top:0px;width:125px;height:22px;"><span class="t" style="left:3px;top:3px;">Time reference</span></div><div class="hd" style="left:283px;top:0px;width:78px;height:22px;"><span class="t" style="left:3px;top:3px;">Signal start</span></div><div class="hd" style="left:361px;top:0px;width:88px;height:22px;"><span class="t" style="left:3px;top:3px;">Signal end</span></div><div class="hd" style="left:449px;top:0px;width:127px;height:22px;"><span class="t" style="left:3px;top:3px;">Sampling frequency</span></div><div class="hd" style="left:576px;top:0px;width:80px;height:22px;"><span class="t" style="left:3px;top:3px;">dt</span></div></div><div style="left:214px;top:101px;width:30px;height:22px;background:#EFEEE6;"></div><div style="left:244px;top:123px;width:614px;height:513px;overflow:hidden;background:#fff;"><div style="left:0px;top:0px;width:700px;height:19px;background:#FFDD76;"></div><div style="left:0px;top:19px;width:700px;height:1px;background:#C6C6BC;"></div><div style="left:0px;top:20px;width:700px;height:19px;background:#fff;"></div><div style="left:0px;top:39px;width:700px;height:1px;background:#C6C6BC;"></div><div style="left:0px;top:40px;width:700px;height:19px;background:#fff;"></div><div style="left:0px;top:59px;width:700px;height:1px;background:#C6C6BC;"></div><div style="left:0px;top:60px;width:700px;height:19px;background:#fff;"></div><div style="left:0px;top:79px;width:700px;height:1px;background:#C6C6BC;"></div><div style="left:0px;top:80px;width:700px;height:19px;background:#fff;"></div><div style="left:0px;top:99px;width:700px;height:1px;background:#C6C6BC;"></div><div style="left:0px;top:100px;width:700px;height:19px;background:#fff;"></div><div style="left:0px;top:119px;width:700px;height:1px;background:#C6C6BC;"></div><div style="left:0px;top:120px;width:700px;height:19px;background:#fff;"></div><div style="left:0px;top:139px;width:700px;height:1px;background:#C6C6BC;"></div><div style="left:0px;top:140px;width:700px;height:19px;background:#fff;"></div><div style="left:0px;top:159px;width:700px;height:1px;background:#C6C6BC;"></div><div style="left:0px;top:160px;width:700px;height:19px;background:#fff;"></div><div style="left:0px;top:179px;width:700px;height:1px;background:#C6C6BC;"></div><div style="left:0px;top:180px;width:700px;height:19px;background:#fff;"></div><div style="left:0px;top:199px;width:700px;height:1px;background:#C6C6BC;"></div><div style="left:0px;top:200px;width:700px;height:19px;background:#fff;"></div><div style="left:0px;top:219px;width:700px;height:1px;background:#C6C6BC;"></div><div style="left:0px;top:220px;width:700px;height:19px;background:#fff;"></div><div style="left:0px;top:239px;width:700px;height:1px;background:#C6C6BC;"></div><div style="left:0px;top:240px;width:700px;height:19px;background:#fff;"></div><div style="left:0px;top:259px;width:700px;height:1px;background:#C6C6BC;"></div><div style="left:0px;top:260px;width:700px;height:19px;background:#fff;"></div><div style="left:0px;top:279px;width:700px;height:1px;background:#C6C6BC;"></div><div style="left:0px;top:280px;width:700px;height:19px;background:#fff;"></div><div style="left:0px;top:299px;width:700px;height:1px;background:#C6C6BC;"></div><div style="left:0px;top:300px;width:700px;height:19px;background:#fff;"></div><div style="left:0px;top:319px;width:700px;height:1px;background:#C6C6BC;"></div><div style="left:0px;top:320px;width:700px;height:19px;background:#fff;"></div><div style="left:0px;top:339px;width:700px;height:1px;background:#C6C6BC;"></div><div style="left:0px;top:340px;width:700px;height:19px;background:#fff;"></div><div style="left:0px;top:359px;width:700px;height:1px;background:#C6C6BC;"></div><div style="left:0px;top:360px;width:700px;height:19px;background:#fff;"></div><div style="left:0px;top:379px;width:700px;height:1px;background:#C6C6BC;"></div><div style="left:0px;top:380px;width:700px;height:19px;background:#fff;"></div><div style="left:0px;top:399px;width:700px;height:1px;background:#C6C6BC;"></div><div style="left:0px;top:400px;width:700px;height:19px;background:#fff;"></div><div style="left:0px;top:419px;width:700px;height:1px;background:#C6C6BC;"></div><div style="left:0px;top:420px;width:700px;height:19px;background:#fff;"></div><div style="left:0px;top:439px;width:700px;height:1px;background:#C6C6BC;"></div><div style="left:0px;top:440px;width:700px;height:19px;background:#fff;"></div><div style="left:0px;top:459px;width:700px;height:1px;background:#C6C6BC;"></div><div style="left:0px;top:460px;width:700px;height:19px;background:#fff;"></div><div style="left:0px;top:479px;width:700px;height:1px;background:#C6C6BC;"></div><div style="left:0px;top:480px;width:700px;height:19px;background:#fff;"></div><div style="left:0px;top:499px;width:700px;height:1px;background:#C6C6BC;"></div><div style="left:0px;top:500px;width:700px;height:19px;background:#fff;"></div><div style="left:0px;top:519px;width:700px;height:1px;background:#C6C6BC;"></div><div style="left:30px;top:0px;width:1px;height:520px;background:#C6C6BC;"></div><div style="left:78px;top:0px;width:1px;height:520px;background:#C6C6BC;"></div><div style="left:157px;top:0px;width:1px;height:520px;background:#C6C6BC;"></div><div style="left:282px;top:0px;width:1px;height:520px;background:#C6C6BC;"></div><div style="left:360px;top:0px;width:1px;height:520px;background:#C6C6BC;"></div><div style="left:448px;top:0px;width:1px;height:520px;background:#C6C6BC;"></div><div style="left:575px;top:0px;width:1px;height:520px;background:#C6C6BC;"></div><div style="left:655px;top:0px;width:1px;height:520px;background:#C6C6BC;"></div><div class="c" style="left:0px;top:0px;width:29px;text-align:right">1</div><div class="c" style="left:81px;top:0px;width:75px;">Vertical</div><div class="c" style="left:160px;top:0px;width:121px;">01/01/2003 00:00:00</div><div class="c" style="left:285px;top:0px;width:74px;">0.0000 s</div><div class="c" style="left:363px;top:0px;width:84px;letter-spacing:-0.12px;">00:06:45.3875</div><div class="c" style="left:449px;top:0px;width:125px;text-align:right">114.286</div><div class="c" style="left:587px;top:0px;width:60px">0.00875</div><div class="c" style="left:0px;top:20px;width:29px;text-align:right">2</div><div class="c" style="left:81px;top:20px;width:75px;">Vertical</div><div class="c" style="left:160px;top:20px;width:121px;">01/01/2003 00:00:00</div><div class="c" style="left:285px;top:20px;width:74px;">0.0000 s</div><div class="c" style="left:363px;top:20px;width:84px;letter-spacing:-0.12px;">00:06:45.3875</div><div class="c" style="left:449px;top:20px;width:125px;text-align:right">114.286</div><div class="c" style="left:587px;top:20px;width:60px">0.00875</div><div class="c" style="left:0px;top:40px;width:29px;text-align:right">3</div><div class="c" style="left:81px;top:40px;width:75px;">Vertical</div><div class="c" style="left:160px;top:40px;width:121px;">01/01/2003 00:00:00</div><div class="c" style="left:285px;top:40px;width:74px;">0.0000 s</div><div class="c" style="left:363px;top:40px;width:84px;letter-spacing:-0.12px;">00:06:45.3875</div><div class="c" style="left:449px;top:40px;width:125px;text-align:right">114.286</div><div class="c" style="left:587px;top:40px;width:60px">0.00875</div><div class="c" style="left:0px;top:60px;width:29px;text-align:right">4</div><div class="c" style="left:81px;top:60px;width:75px;">Vertical</div><div class="c" style="left:160px;top:60px;width:121px;">01/01/2003 00:00:00</div><div class="c" style="left:285px;top:60px;width:74px;">0.0000 s</div><div class="c" style="left:363px;top:60px;width:84px;letter-spacing:-0.12px;">00:06:45.3875</div><div class="c" style="left:449px;top:60px;width:125px;text-align:right">114.286</div><div class="c" style="left:587px;top:60px;width:60px">0.00875</div><div class="c" style="left:0px;top:80px;width:29px;text-align:right">5</div><div class="c" style="left:81px;top:80px;width:75px;">Vertical</div><div class="c" style="left:160px;top:80px;width:121px;">01/01/2003 00:00:00</div><div class="c" style="left:285px;top:80px;width:74px;">0.0000 s</div><div class="c" style="left:363px;top:80px;width:84px;letter-spacing:-0.12px;">00:06:45.3875</div><div class="c" style="left:449px;top:80px;width:125px;text-align:right">114.286</div><div class="c" style="left:587px;top:80px;width:60px">0.00875</div><div class="c" style="left:0px;top:100px;width:29px;text-align:right">6</div><div class="c" style="left:81px;top:100px;width:75px;">Vertical</div><div class="c" style="left:160px;top:100px;width:121px;">01/01/2003 00:00:00</div><div class="c" style="left:285px;top:100px;width:74px;">0.0000 s</div><div class="c" style="left:363px;top:100px;width:84px;letter-spacing:-0.12px;">00:06:45.3875</div><div class="c" style="left:449px;top:100px;width:125px;text-align:right">114.286</div><div class="c" style="left:587px;top:100px;width:60px">0.00875</div><div class="c" style="left:0px;top:120px;width:29px;text-align:right">7</div><div class="c" style="left:81px;top:120px;width:75px;">Vertical</div><div class="c" style="left:160px;top:120px;width:121px;">01/01/2003 00:00:00</div><div class="c" style="left:285px;top:120px;width:74px;">0.0000 s</div><div class="c" style="left:363px;top:120px;width:84px;letter-spacing:-0.12px;">00:06:45.3875</div><div class="c" style="left:449px;top:120px;width:125px;text-align:right">114.286</div><div class="c" style="left:587px;top:120px;width:60px">0.00875</div><div class="c" style="left:0px;top:140px;width:29px;text-align:right">8</div><div class="c" style="left:81px;top:140px;width:75px;">Vertical</div><div class="c" style="left:160px;top:140px;width:121px;">01/01/2003 00:00:00</div><div class="c" style="left:285px;top:140px;width:74px;">0.0000 s</div><div class="c" style="left:363px;top:140px;width:84px;letter-spacing:-0.12px;">00:06:45.3875</div><div class="c" style="left:449px;top:140px;width:125px;text-align:right">114.286</div><div class="c" style="left:587px;top:140px;width:60px">0.00875</div><div class="c" style="left:0px;top:160px;width:29px;text-align:right">9</div><div class="c" style="left:81px;top:160px;width:75px;">Vertical</div><div class="c" style="left:160px;top:160px;width:121px;">01/01/2003 00:00:00</div><div class="c" style="left:285px;top:160px;width:74px;">0.0000 s</div><div class="c" style="left:363px;top:160px;width:84px;letter-spacing:-0.12px;">00:06:45.3875</div><div class="c" style="left:449px;top:160px;width:125px;text-align:right">114.286</div><div class="c" style="left:587px;top:160px;width:60px">0.00875</div><div class="c" style="left:0px;top:180px;width:29px;text-align:right">10</div><div class="c" style="left:81px;top:180px;width:75px;">Vertical</div><div class="c" style="left:160px;top:180px;width:121px;">01/01/2003 00:00:00</div><div class="c" style="left:285px;top:180px;width:74px;">0.0000 s</div><div class="c" style="left:363px;top:180px;width:84px;letter-spacing:-0.12px;">00:06:45.3875</div><div class="c" style="left:449px;top:180px;width:125px;text-align:right">114.286</div><div class="c" style="left:587px;top:180px;width:60px">0.00875</div><div class="c" style="left:0px;top:200px;width:29px;text-align:right">11</div><div class="c" style="left:81px;top:200px;width:75px;">Vertical</div><div class="c" style="left:160px;top:200px;width:121px;">01/01/2003 00:00:00</div><div class="c" style="left:285px;top:200px;width:74px;">0.0000 s</div><div class="c" style="left:363px;top:200px;width:84px;letter-spacing:-0.12px;">00:06:45.3875</div><div class="c" style="left:449px;top:200px;width:125px;text-align:right">114.286</div><div class="c" style="left:587px;top:200px;width:60px">0.00875</div><div class="c" style="left:0px;top:220px;width:29px;text-align:right">12</div><div class="c" style="left:81px;top:220px;width:75px;">Vertical</div><div class="c" style="left:160px;top:220px;width:121px;">01/01/2003 00:00:00</div><div class="c" style="left:285px;top:220px;width:74px;">0.0000 s</div><div class="c" style="left:363px;top:220px;width:84px;letter-spacing:-0.12px;">00:06:45.3875</div><div class="c" style="left:449px;top:220px;width:125px;text-align:right">114.286</div><div class="c" style="left:587px;top:220px;width:60px">0.00875</div><div class="c" style="left:0px;top:240px;width:29px;text-align:right">13</div><div class="c" style="left:81px;top:240px;width:75px;">Vertical</div><div class="c" style="left:160px;top:240px;width:121px;">01/01/2003 00:00:00</div><div class="c" style="left:285px;top:240px;width:74px;">0.0000 s</div><div class="c" style="left:363px;top:240px;width:84px;letter-spacing:-0.12px;">00:06:45.3875</div><div class="c" style="left:449px;top:240px;width:125px;text-align:right">114.286</div><div class="c" style="left:587px;top:240px;width:60px">0.00875</div><div class="c" style="left:0px;top:260px;width:29px;text-align:right">14</div><div class="c" style="left:81px;top:260px;width:75px;">Vertical</div><div class="c" style="left:160px;top:260px;width:121px;">01/01/2003 00:00:00</div><div class="c" style="left:285px;top:260px;width:74px;">0.0000 s</div><div class="c" style="left:363px;top:260px;width:84px;letter-spacing:-0.12px;">00:06:45.3875</div><div class="c" style="left:449px;top:260px;width:125px;text-align:right">114.286</div><div class="c" style="left:587px;top:260px;width:60px">0.00875</div><div class="c" style="left:0px;top:280px;width:29px;text-align:right">15</div><div class="c" style="left:81px;top:280px;width:75px;">Vertical</div><div class="c" style="left:160px;top:280px;width:121px;">01/01/2003 00:00:00</div><div class="c" style="left:285px;top:280px;width:74px;">0.0000 s</div><div class="c" style="left:363px;top:280px;width:84px;letter-spacing:-0.12px;">00:06:45.3875</div><div class="c" style="left:449px;top:280px;width:125px;text-align:right">114.286</div><div class="c" style="left:587px;top:280px;width:60px">0.00875</div><div class="c" style="left:0px;top:300px;width:29px;text-align:right">16</div><div class="c" style="left:81px;top:300px;width:75px;">Vertical</div><div class="c" style="left:160px;top:300px;width:121px;">01/01/2003 00:00:00</div><div class="c" style="left:285px;top:300px;width:74px;">0.0000 s</div><div class="c" style="left:363px;top:300px;width:84px;letter-spacing:-0.12px;">00:06:45.3875</div><div class="c" style="left:449px;top:300px;width:125px;text-align:right">114.286</div><div class="c" style="left:587px;top:300px;width:60px">0.00875</div><div class="c" style="left:0px;top:320px;width:29px;text-align:right">17</div><div class="c" style="left:81px;top:320px;width:75px;">Vertical</div><div class="c" style="left:160px;top:320px;width:121px;">01/01/2003 00:00:00</div><div class="c" style="left:285px;top:320px;width:74px;">0.0000 s</div><div class="c" style="left:363px;top:320px;width:84px;letter-spacing:-0.12px;">00:06:45.3875</div><div class="c" style="left:449px;top:320px;width:125px;text-align:right">114.286</div><div class="c" style="left:587px;top:320px;width:60px">0.00875</div><div class="c" style="left:0px;top:340px;width:29px;text-align:right">18</div><div class="c" style="left:81px;top:340px;width:75px;">Vertical</div><div class="c" style="left:160px;top:340px;width:121px;">01/01/2003 00:00:00</div><div class="c" style="left:285px;top:340px;width:74px;">0.0000 s</div><div class="c" style="left:363px;top:340px;width:84px;letter-spacing:-0.12px;">00:06:45.3875</div><div class="c" style="left:449px;top:340px;width:125px;text-align:right">114.286</div><div class="c" style="left:587px;top:340px;width:60px">0.00875</div><div class="c" style="left:0px;top:360px;width:29px;text-align:right">19</div><div class="c" style="left:81px;top:360px;width:75px;">Vertical</div><div class="c" style="left:160px;top:360px;width:121px;">01/01/2003 00:00:00</div><div class="c" style="left:285px;top:360px;width:74px;">0.0000 s</div><div class="c" style="left:363px;top:360px;width:84px;letter-spacing:-0.12px;">00:06:45.3875</div><div class="c" style="left:449px;top:360px;width:125px;text-align:right">114.286</div><div class="c" style="left:587px;top:360px;width:60px">0.00875</div><div class="c" style="left:0px;top:380px;width:29px;text-align:right">20</div><div class="c" style="left:81px;top:380px;width:75px;">Vertical</div><div class="c" style="left:160px;top:380px;width:121px;">01/01/2003 00:00:00</div><div class="c" style="left:285px;top:380px;width:74px;">0.0000 s</div><div class="c" style="left:363px;top:380px;width:84px;letter-spacing:-0.12px;">00:06:45.3875</div><div class="c" style="left:449px;top:380px;width:125px;text-align:right">114.286</div><div class="c" style="left:587px;top:380px;width:60px">0.00875</div><div class="c" style="left:0px;top:400px;width:29px;text-align:right">21</div><div class="c" style="left:81px;top:400px;width:75px;">Vertical</div><div class="c" style="left:160px;top:400px;width:121px;">01/01/2003 00:00:00</div><div class="c" style="left:285px;top:400px;width:74px;">0.0000 s</div><div class="c" style="left:363px;top:400px;width:84px;letter-spacing:-0.12px;">00:06:45.3875</div><div class="c" style="left:449px;top:400px;width:125px;text-align:right">114.286</div><div class="c" style="left:587px;top:400px;width:60px">0.00875</div><div class="c" style="left:0px;top:420px;width:29px;text-align:right">22</div><div class="c" style="left:81px;top:420px;width:75px;">Vertical</div><div class="c" style="left:160px;top:420px;width:121px;">01/01/2003 00:00:00</div><div class="c" style="left:285px;top:420px;width:74px;">0.0000 s</div><div class="c" style="left:363px;top:420px;width:84px;letter-spacing:-0.12px;">00:06:45.3875</div><div class="c" style="left:449px;top:420px;width:125px;text-align:right">114.286</div><div class="c" style="left:587px;top:420px;width:60px">0.00875</div><div class="c" style="left:0px;top:440px;width:29px;text-align:right">23</div><div class="c" style="left:81px;top:440px;width:75px;">Vertical</div><div class="c" style="left:160px;top:440px;width:121px;">01/01/2003 00:00:00</div><div class="c" style="left:285px;top:440px;width:74px;">0.0000 s</div><div class="c" style="left:363px;top:440px;width:84px;letter-spacing:-0.12px;">00:06:45.3875</div><div class="c" style="left:449px;top:440px;width:125px;text-align:right">114.286</div><div class="c" style="left:587px;top:440px;width:60px">0.00875</div><div class="c" style="left:0px;top:460px;width:29px;text-align:right">24</div><div class="c" style="left:81px;top:460px;width:75px;">Vertical</div><div class="c" style="left:160px;top:460px;width:121px;">01/01/2003 00:00:00</div><div class="c" style="left:285px;top:460px;width:74px;">0.0000 s</div><div class="c" style="left:363px;top:460px;width:84px;letter-spacing:-0.12px;">00:06:45.3875</div><div class="c" style="left:449px;top:460px;width:125px;text-align:right">114.286</div><div class="c" style="left:587px;top:460px;width:60px">0.00875</div><div class="c" style="left:0px;top:480px;width:29px;text-align:right">25</div><div class="c" style="left:81px;top:480px;width:75px;">Vertical</div><div class="c" style="left:160px;top:480px;width:121px;">01/01/2003 00:00:00</div><div class="c" style="left:285px;top:480px;width:74px;">0.0000 s</div><div class="c" style="left:363px;top:480px;width:84px;letter-spacing:-0.12px;">00:06:45.3875</div><div class="c" style="left:449px;top:480px;width:125px;text-align:right">114.286</div><div class="c" style="left:587px;top:480px;width:60px">0.00875</div><div class="c" style="left:0px;top:500px;width:29px;text-align:right">26</div><div class="c" style="left:81px;top:500px;width:75px;">Vertical</div><div class="c" style="left:160px;top:500px;width:121px;">01/01/2003 00:00:00</div><div class="c" style="left:285px;top:500px;width:74px;">0.0000 s</div><div class="c" style="left:363px;top:500px;width:84px;letter-spacing:-0.12px;">00:06:45.3875</div><div class="c" style="left:449px;top:500px;width:125px;text-align:right">114.286</div><div class="c" style="left:587px;top:500px;width:60px">0.00875</div></div><div style="left:214px;top:123px;width:30px;height:513px;overflow:hidden;"><div style="left:0px;top:0px;width:30px;height:20px;background:#EEEADE;border-top:1px solid #000;border-left:1px solid #000;border-right:1px solid #fff;border-bottom:1px solid #fff;box-shadow:inset 1px 1px 0 #000;"><span class="t" style="left:3px;top:2px;font-weight:bold">1</span></div><div class="hd" style="left:0px;top:20px;width:30px;height:20px;"><span class="t" style="left:3px;top:2px">2</span></div><div class="hd" style="left:0px;top:40px;width:30px;height:20px;"><span class="t" style="left:3px;top:2px">3</span></div><div class="hd" style="left:0px;top:60px;width:30px;height:20px;"><span class="t" style="left:3px;top:2px">4</span></div><div class="hd" style="left:0px;top:80px;width:30px;height:20px;"><span class="t" style="left:3px;top:2px">5</span></div><div class="hd" style="left:0px;top:100px;width:30px;height:20px;"><span class="t" style="left:3px;top:2px">6</span></div><div class="hd" style="left:0px;top:120px;width:30px;height:20px;"><span class="t" style="left:3px;top:2px">7</span></div><div class="hd" style="left:0px;top:140px;width:30px;height:20px;"><span class="t" style="left:3px;top:2px">8</span></div><div class="hd" style="left:0px;top:160px;width:30px;height:20px;"><span class="t" style="left:3px;top:2px">9</span></div><div class="hd" style="left:0px;top:180px;width:30px;height:20px;"><span class="t" style="left:3px;top:2px">10</span></div><div class="hd" style="left:0px;top:200px;width:30px;height:20px;"><span class="t" style="left:3px;top:2px">11</span></div><div class="hd" style="left:0px;top:220px;width:30px;height:20px;"><span class="t" style="left:3px;top:2px">12</span></div><div class="hd" style="left:0px;top:240px;width:30px;height:20px;"><span class="t" style="left:3px;top:2px">13</span></div><div class="hd" style="left:0px;top:260px;width:30px;height:20px;"><span class="t" style="left:3px;top:2px">14</span></div><div class="hd" style="left:0px;top:280px;width:30px;height:20px;"><span class="t" style="left:3px;top:2px">15</span></div><div class="hd" style="left:0px;top:300px;width:30px;height:20px;"><span class="t" style="left:3px;top:2px">16</span></div><div class="hd" style="left:0px;top:320px;width:30px;height:20px;"><span class="t" style="left:3px;top:2px">17</span></div><div class="hd" style="left:0px;top:340px;width:30px;height:20px;"><span class="t" style="left:3px;top:2px">18</span></div><div class="hd" style="left:0px;top:360px;width:30px;height:20px;"><span class="t" style="left:3px;top:2px">19</span></div><div class="hd" style="left:0px;top:380px;width:30px;height:20px;"><span class="t" style="left:3px;top:2px">20</span></div><div class="hd" style="left:0px;top:400px;width:30px;height:20px;"><span class="t" style="left:3px;top:2px">21</span></div><div class="hd" style="left:0px;top:420px;width:30px;height:20px;"><span class="t" style="left:3px;top:2px">22</span></div><div class="hd" style="left:0px;top:440px;width:30px;height:20px;"><span class="t" style="left:3px;top:2px">23</span></div><div class="hd" style="left:0px;top:460px;width:30px;height:20px;"><span class="t" style="left:3px;top:2px">24</span></div><div class="hd" style="left:0px;top:480px;width:30px;height:20px;"><span class="t" style="left:3px;top:2px">25</span></div><div class="hd" style="left:0px;top:500px;width:30px;height:20px;"><span class="t" style="left:3px;top:2px">26</span></div></div><div class="trk" style="left:858px;top:101px;width:16px;height:535px;"></div><div class="rb" style="left:858px;top:101px;width:16px;height:16px;"><svg style="left:3px;top:4px" width="8" height="5" viewBox="0 0 8 5"><path d="M4 0.5L8 4.5H0Z" fill="#000"/></svg></div><div class="rb" style="left:858px;top:117px;width:16px;height:195px;"></div><div class="rb" style="left:858px;top:620px;width:16px;height:16px;"><svg style="left:3px;top:5px" width="8" height="5" viewBox="0 0 8 5"><path d="M0 0.5H8L4 4.5Z" fill="#000"/></svg></div><div class="trk" style="left:214px;top:636px;width:644px;height:16px;"></div><div class="rb" style="left:214px;top:636px;width:16px;height:16px;"><svg style="left:4px;top:3px" width="5" height="8" viewBox="0 0 5 8"><path d="M4.5 0V8L0.5 4Z" fill="#000"/></svg></div><div class="rb" style="left:230px;top:636px;width:335px;height:16px;"></div><div class="rb" style="left:842px;top:636px;width:16px;height:16px;"><svg style="left:5px;top:3px" width="5" height="8" viewBox="0 0 5 8"><path d="M0.5 0V8L4.5 4Z" fill="#000"/></svg></div><div style="left:858px;top:636px;width:16px;height:16px;background:#EFEEE6;"></div><div style="left:212px;top:652px;width:664px;height:2px;background:#fff;"></div>
<!-- status bar -->
<div style="left:3px;top:698px;width:949px;height:26px;background:#EFEEE6;"></div><div style="left:3px;top:694px;width:204px;height:30px;background:#EFEEE6;"></div><div style="left:651px;top:701px;width:180px;height:22px;border-top:1px solid #555753;border-left:1px solid #555753;border-right:1px solid #fff;border-bottom:1px solid #fff;"></div><span class="t" style="left:652px;top:705px;word-spacing:0.6px">Database: -, 66 signals, 66 files</span><div style="left:833px;top:701px;width:102px;height:22px;border-top:1px solid #555753;border-left:1px solid #555753;border-right:1px solid #fff;border-bottom:1px solid #fff;"></div><div style="left:834px;top:702px;width:62px;height:20px;border-top:2px solid #555753;border-left:2px solid #555753;border-right:1px solid #fff;border-bottom:1px solid #fff;background:#F6F3E6;"></div><div style="left:837px;top:705px;width:7px;height:14px;background:#FFDB70;"></div><div style="left:846px;top:705px;width:7px;height:14px;background:#FFDB70;"></div><div style="left:855px;top:705px;width:7px;height:14px;background:#FFDB70;"></div><div style="left:864px;top:705px;width:7px;height:14px;background:#FFDB70;"></div><div style="left:873px;top:705px;width:7px;height:14px;background:#FFDB70;"></div><div style="left:882px;top:705px;width:7px;height:14px;background:#FFDB70;"></div><div style="left:891px;top:705px;width:2px;height:14px;background:#FFDB70;"></div><span class="t" style="left:898px;top:705px;">100%</span><svg style="left:939px;top:711px" width="13" height="13" viewBox="0 0 13 13"><path d="M1 13L13 1M5 13L13 5M9 13L13 9" stroke="#555753" stroke-width="1.5"/><path d="M-0.2 13L13 -0.2M3.8 13L13 3.8M7.8 13L13 7.8" stroke="#fff" stroke-width="1"/></svg>
</div>
</body></html>
